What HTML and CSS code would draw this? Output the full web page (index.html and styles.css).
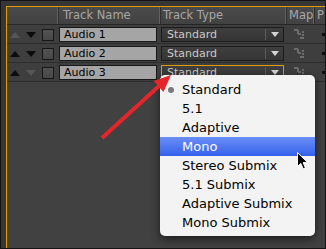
FILE: index.html
```html
<!DOCTYPE html>
<html lang="en">
<head>
    <meta charset="UTF-8">
    <title>Track Type Menu</title>
    <link rel="stylesheet" href="styles.css">
</head>
<body>
    <div class="frame">
        <div class="panel">
            <div class="head">
                <div class="cell c-ctl"></div>
                <div class="cell c-name">Track Name</div>
                <div class="cell c-type">Track Type</div>
                <div class="cell c-map">Map</div>
                <div class="cell c-p">P</div>
            </div>

            <div class="row">
                <div class="cell c-ctl"><span class="tri up dim"></span><span class="tri down"></span><span class="check"></span></div>
                <div class="cell c-name"><div class="field">Audio 1</div></div>
                <div class="cell c-type"><div class="select"><span class="val">Standard</span><span class="caret"></span></div></div>
                <div class="cell c-map">
                    <svg class="map-icon" width="10" height="10" viewBox="0 0 10 10">
                        <rect x="0" y="0" width="4" height="2" />
                        <rect x="3" y="1" width="2" height="4" />
                        <rect x="4" y="4" width="3" height="2" />
                        <rect x="8" y="2" width="2" height="2" />
                        <rect x="8" y="5" width="2" height="2" />
                        <rect x="6" y="8" width="4" height="2" />
                    </svg>
                </div>
                <div class="cell c-p"><span class="pin"></span></div>
            </div>

            <div class="row">
                <div class="cell c-ctl"><span class="tri up"></span><span class="tri down"></span><span class="check"></span></div>
                <div class="cell c-name"><div class="field">Audio 2</div></div>
                <div class="cell c-type"><div class="select"><span class="val">Standard</span><span class="caret"></span></div></div>
                <div class="cell c-map">
                    <svg class="map-icon" width="10" height="10" viewBox="0 0 10 10">
                        <rect x="0" y="0" width="4" height="2" />
                        <rect x="3" y="1" width="2" height="4" />
                        <rect x="4" y="4" width="3" height="2" />
                        <rect x="8" y="2" width="2" height="2" />
                        <rect x="8" y="5" width="2" height="2" />
                        <rect x="6" y="8" width="4" height="2" />
                    </svg>
                </div>
                <div class="cell c-p"><span class="pin"></span></div>
            </div>

            <div class="row">
                <div class="cell c-ctl"><span class="tri up"></span><span class="tri down dim"></span><span class="check"></span></div>
                <div class="cell c-name"><div class="field">Audio 3</div></div>
                <div class="cell c-type"><div class="select focus"><span class="val">Standard</span><span class="caret"></span></div></div>
                <div class="cell c-map">
                    <svg class="map-icon" width="10" height="10" viewBox="0 0 10 10">
                        <rect x="0" y="0" width="4" height="2" />
                        <rect x="3" y="1" width="2" height="4" />
                        <rect x="4" y="4" width="3" height="2" />
                        <rect x="8" y="2" width="2" height="2" />
                        <rect x="8" y="5" width="2" height="2" />
                        <rect x="6" y="8" width="4" height="2" />
                    </svg>
                </div>
                <div class="cell c-p"><span class="pin"></span></div>
            </div>
        </div>

        <!-- dropdown that is open over the third row -->
        <ul class="menu">
            <li class="checked">Standard</li>
            <li>5.1</li>
            <li>Adaptive</li>
            <li class="hover">Mono</li>
            <li>Stereo Submix</li>
            <li>5.1 Submix</li>
            <li>Adaptive Submix</li>
            <li>Mono Submix</li>
        </ul>

        <!-- red callout arrow -->
        <svg class="arrow" width="326" height="249" viewBox="0 0 326 249">
            <line x1="102" y1="138" x2="159" y2="86" stroke="#e3262b" stroke-width="4" />
            <polygon points="171,75 163.5,92 153.5,81" fill="#e3262b" />
        </svg>

        <!-- mouse pointer -->
        <svg class="cursor" width="12" height="18" viewBox="0 0 12 18">
            <path d="M0.5 0.5 L0.5 14.5 L3.8 11.4 L6.2 16.8 L8.4 15.8 L6.1 10.6 L10.5 10.6 Z" fill="#000" stroke="#fff" stroke-width="1" />
        </svg>
    </div>
</body>
</html>
```

FILE: styles.css
```css
body {
    margin: 0;
    font-family: "DejaVu Sans", Verdana, sans-serif;
}

.frame {
    position: relative;
    width: 326px;
    height: 249px;
    box-sizing: border-box;
    border: 1px solid #141414;
    background: #363636;
    padding: 5px 0 0 5px;
    overflow: hidden;
}

.panel {
    height: 100%;
    box-sizing: border-box;
    border-top: 1px solid #e39c00;
    border-left: 1px solid #e39c00;
    background: #414141;
}

.head,
.row {
    display: flex;
}

.head {
    height: 17px;
    border-bottom: 1px solid #262626;
    background: linear-gradient(#4a4a4a, #424242);
    color: #a6a6a6;
    font-size: 11.5px;
    line-height: 16px;
}

.row {
    height: 19px;
    box-sizing: border-box;
    border-bottom: 1px solid #2c2c2c;
    background: #3e3e3e;
    padding-top: 2px;
}

.cell {
    box-sizing: border-box;
    border-right: 1px solid transparent;
    flex: none;
}

.head .cell {
    border-right: 1px solid #626262;
    box-shadow: 1px 0 0 #2e2e2e;
}

.c-ctl { width: 51px; }
.c-name { width: 102px; }
.c-type { width: 126px; }
.c-map { width: 28px; }
.c-p { width: 11px; }

.head .c-name { padding-left: 5px; }
.head .c-type { padding-left: 3px; }
.head .c-map { padding-left: 3px; }
.head .c-p { padding-left: 3px; border-right: none; }

/* move up / move down arrows and the small box */
.row .c-ctl {
    display: flex;
    align-items: center;
    height: 15px;
    padding-left: 3px;
}

.tri {
    width: 0;
    height: 0;
    border-left: 5px solid transparent;
    border-right: 5px solid transparent;
    margin-right: 6px;
}

.tri.up { border-bottom: 6px solid #0c0c0c; }
.tri.down { border-top: 6px solid #0c0c0c; }
.tri.up.dim { border-bottom-color: #565656; }
.tri.down.dim { border-top-color: #565656; }

.check {
    width: 12px;
    height: 12px;
    box-sizing: border-box;
    border: 1px solid #161616;
    background: linear-gradient(#525252, #474747);
}

.field {
    margin-left: 1px;
    width: 98px;
    height: 15px;
    box-sizing: border-box;
    border: 1px solid #181818;
    background: #a5a5a5;
    color: #000;
    font-size: 11px;
    line-height: 13px;
    padding-left: 4px;
}

.select {
    display: flex;
    margin-left: 1px;
    width: 123px;
    height: 15px;
    box-sizing: border-box;
    border: 1px solid #1b1b1b;
    background: linear-gradient(#3f3f3f, #353535);
    color: #c9c9c9;
    font-size: 11px;
    line-height: 13px;
}

.select.focus {
    border-color: #e39c00;
}

.select .val {
    flex: 1;
    padding-left: 5px;
    border-right: 1px solid #5a5a5a;
    margin: 1px 0;
    line-height: 11px;
}

.select .caret {
    width: 17px;
    display: flex;
    justify-content: center;
    align-items: center;
}

.select .caret::before {
    content: "";
    border-left: 4px solid transparent;
    border-right: 4px solid transparent;
    border-top: 5px solid #d4d4d4;
}

.row .c-map {
    padding: 2px 0 0 8px;
}

.map-icon {
    display: block;
    fill: #6c6c6c;
}

.row .c-p {
    padding: 6px 0 0 8px;
}

.pin {
    display: block;
    width: 4px;
    height: 3px;
    background: #0e0e0e;
}

/* open popup menu */
.menu {
    position: absolute;
    left: 159px;
    top: 74px;
    width: 155px;
    height: 161px;
    box-sizing: border-box;
    margin: 0;
    padding: 5px 0 4px;
    list-style: none;
    background: #f3f3f3;
    border-radius: 5px;
    box-shadow: 0 3px 10px rgba(0, 0, 0, 0.6);
    font-size: 13px;
    color: #000;
}

.menu li {
    height: 19px;
    line-height: 19px;
    padding-left: 22px;
    position: relative;
}

.menu li.checked::before {
    content: "";
    position: absolute;
    left: 8px;
    top: 7px;
    width: 6px;
    height: 6px;
    border-radius: 50%;
    background: #7a7a7a;
}

.menu li.hover {
    background: linear-gradient(#6a8ef7, #3461ea);
    color: #fff;
}

.arrow {
    position: absolute;
    left: -1px;
    top: -1px;
}

.cursor {
    position: absolute;
    left: 296px;
    top: 151px;
}
```
